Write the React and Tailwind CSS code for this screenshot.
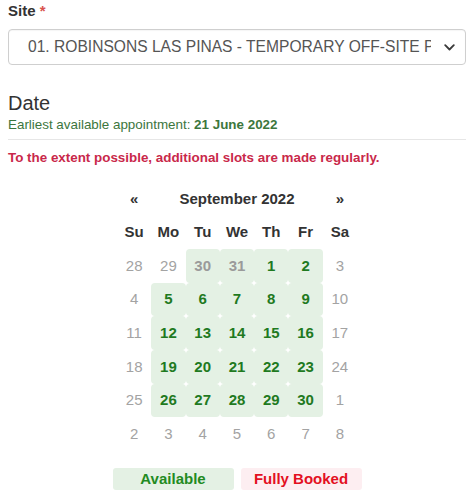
import React from "react";

const weeks = [
  [[28,"o"],[29,"o"],[30,"p"],[31,"p"],[1,"a"],[2,"a"],[3,"o"]],
  [[4,"o"],[5,"a"],[6,"a"],[7,"a"],[8,"a"],[9,"a"],[10,"o"]],
  [[11,"o"],[12,"a"],[13,"a"],[14,"a"],[15,"a"],[16,"a"],[17,"o"]],
  [[18,"o"],[19,"a"],[20,"a"],[21,"a"],[22,"a"],[23,"a"],[24,"o"]],
  [[25,"o"],[26,"a"],[27,"a"],[28,"a"],[29,"a"],[30,"a"],[1,"o"]],
  [[2,"o"],[3,"o"],[4,"o"],[5,"o"],[6,"o"],[7,"o"],[8,"o"]],
];

function Cell({ v, t }) {
  if (t === "o") {
    return <div className="h-[33.6px] flex items-center justify-center text-[#a3a3a3]">{v}</div>;
  }
  if (t === "p") {
    return <div className="h-[33.6px] flex items-center justify-center rounded-[4px] bg-[#e4f1e4] font-bold text-[#9a9a9a]">{v}</div>;
  }
  return <div className="h-[33.6px] flex items-center justify-center rounded-[4px] bg-[#e4f1e4] font-bold text-[#1f7a1f]">{v}</div>;
}

export default function App() {
  return (
    <div className="w-[474px] h-[497px] bg-white px-2 font-['Liberation_Sans',Arial,sans-serif] text-[#333] overflow-hidden">
      <div className="pt-[2px] h-[29px] text-[15px] font-bold leading-[17px]">
        Site <span className="text-[#d9534f]">*</span>
      </div>
      <div className="h-[36px] border border-[#cfcfcf] rounded-[4px] flex items-center pl-[19px] pr-[10px] shadow-[inset_0_1px_1px_rgba(0,0,0,0.04)]">
        <div className="w-[403px] overflow-hidden whitespace-nowrap text-[15.6px] text-[#555]">
          01. ROBINSONS LAS PINAS - TEMPORARY OFF-SITE PROCESSING CENTER
        </div>
        <div className="flex-1 flex justify-end">
          <svg width="11" height="7" viewBox="0 0 11 7" fill="none">
            <path d="M1.2 1.2 L5.5 5.5 L9.8 1.2" stroke="#3a3a3a" strokeWidth="1.8" strokeLinecap="round" strokeLinejoin="round" />
          </svg>
        </div>
      </div>
      <div className="mt-[26px] text-[20px] leading-[24px] text-[#333]">Date</div>
      <div className="text-[13.4px] leading-[16px] text-[#3c763d] mt-[2px]">
        Earliest available appointment: <b>21 June 2022</b>
      </div>
      <div className="mt-[6px] border-t border-[#e6e6e6]"></div>
      <div className="mt-[10px] text-[13.4px] leading-[16px] font-bold text-[#c9284a]">
        To the extent possible, additional slots are made regularly.
      </div>
      <div className="mx-auto w-[240px] mt-[16px] text-[15px]">
        <div className="grid grid-cols-7">
          <div className="h-[33.6px] flex items-center justify-center font-bold text-[#333]">«</div>
          <div className="col-span-5 h-[33.6px] flex items-center justify-center font-bold text-[#333]">September 2022</div>
          <div className="h-[33.6px] flex items-center justify-center font-bold text-[#333]">»</div>
          {["Su","Mo","Tu","We","Th","Fr","Sa"].map(d => (
            <div key={d} className="h-[33.6px] flex items-center justify-center font-bold text-[#333]">{d}</div>
          ))}
          {weeks.flat().map(([v, t], i) => <Cell key={i} v={v} t={t} />)}
        </div>
      </div>
      <div className="mt-[17px] flex justify-center gap-[7px] text-[15px] font-bold">
        <div className="w-[121px] h-[22px] flex items-center justify-center rounded-[3px] bg-[#e4f1e4] text-[#228b22]">Available</div>
        <div className="w-[121px] h-[22px] flex items-center justify-center rounded-[3px] bg-[#fdeef1] text-[#e3101f]">Fully Booked</div>
      </div>
    </div>
  );
}
